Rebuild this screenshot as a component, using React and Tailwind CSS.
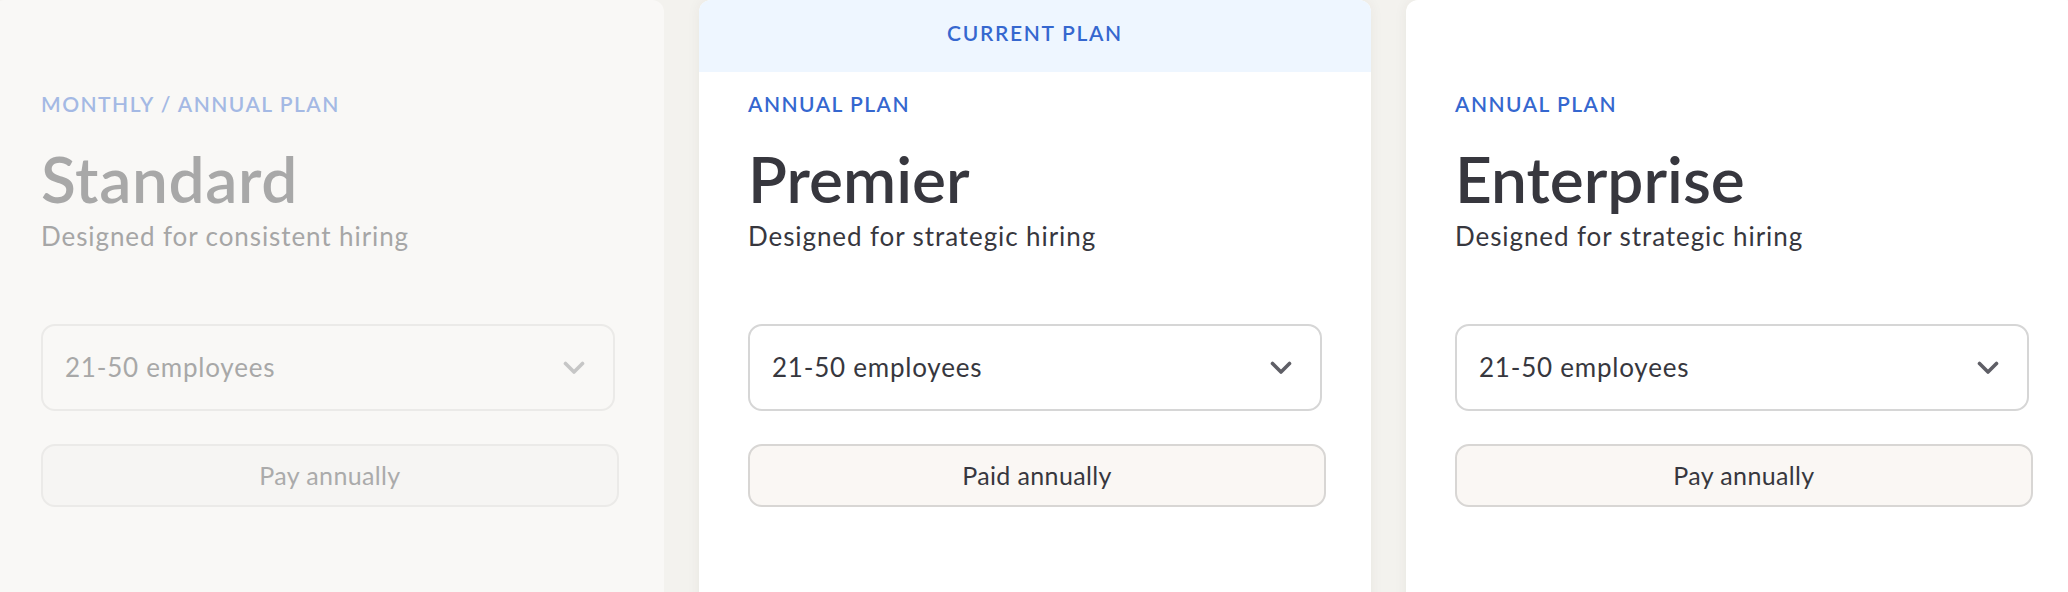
import { useState } from "react";

const plans = [
  {
    id: "standard",
    label: "MONTHLY / ANNUAL PLAN",
    name: "Standard",
    blurb: "Designed for consistent hiring",
    button: "Pay annually",
    muted: true,
  },
  {
    id: "premier",
    label: "ANNUAL PLAN",
    name: "Premier",
    blurb: "Designed for strategic hiring",
    button: "Paid annually",
    current: true,
  },
  {
    id: "enterprise",
    label: "ANNUAL PLAN",
    name: "Enterprise",
    blurb: "Designed for strategic hiring",
    button: "Pay annually",
  },
];

function Chevron({ muted }) {
  return (
    <svg width="22" height="14" viewBox="0 0 22 14" fill="none">
      <polyline
        points="2.5,2.5 11,11 19.5,2.5"
        stroke={muted ? "#c6c6c6" : "#5f5f66"}
        strokeWidth="3.6"
        strokeLinecap="round"
        strokeLinejoin="round"
      />
    </svg>
  );
}

function PlanCard({ plan }) {
  const [size] = useState("21-50 employees");
  const muted = plan.muted;

  return (
    <div
      className={`w-[672px] shrink-0 h-full rounded-t-xl overflow-hidden flex flex-col ${
        muted ? "bg-[#f9f8f6]" : "bg-white shadow-[0_0_14px_rgba(60,50,30,0.06)]"
      }`}
    >
      {/* Top banner, empty for the other plans */}
      {plan.current ? (
        <div className="h-[72px] pb-[7px] bg-[#eef6ff] flex items-center justify-center">
          <span className="text-[21px] leading-6 font-semibold tracking-[0.08em] text-[#3567cf]">
            CURRENT PLAN
          </span>
        </div>
      ) : (
        <div className="h-[72px]" />
      )}

      <div className="px-[49px] pt-[20px] flex flex-col">
        <p
          className={`text-[21px] leading-6 font-semibold tracking-[0.07em] ${
            muted ? "text-[#a4b9e4] tracking-[0.06em]" : "text-[#3567cf]"
          }`}
        >
          {plan.label}
        </p>
        <h2
          className={`mt-[24px] text-[64px] leading-[77px] font-semibold ${
            muted ? "text-[#a8a8a8] tracking-[0.01em]" : "text-[#37373e]"
          }`}
        >
          {plan.name}
        </h2>
        <p
          className={`mt-[4px] text-[26px] leading-[31px] tracking-[0.035em] ${
            muted ? "text-[#a6a6a6]" : "text-[#37373e]"
          }`}
        >
          {plan.blurb}
        </p>

        {/* Company size select */}
        <div
          className={`mt-[72px] h-[87px] w-[574px] rounded-[14px] border-2 flex items-center justify-between pl-[22px] pr-[28px] ${
            muted ? "border-[#ebeae8] text-[#a8a8a8]" : "border-[#d6d6d6] bg-white text-[#37373e]"
          }`}
        >
          <span className="text-[26px] tracking-[0.03em]">{size}</span>
          <Chevron muted={muted} />
        </div>

        <button
          className={`mt-[33px] h-[63px] w-[578px] rounded-[14px] border-2 text-[25px] tracking-[0.015em] ${
            muted
              ? "bg-[#f6f5f3] border-[#ebeae8] text-[#ababab]"
              : "bg-[#faf7f4] border-[#d8d6d4] text-[#37373e]"
          }`}
        >
          {plan.button}
        </button>
      </div>
    </div>
  );
}

export default function App() {
  return (
    <div
      className="h-[592px] w-full overflow-hidden bg-[#f3f2ee]"
      style={{ fontFamily: "Lato, 'Noto Sans', sans-serif" }}
    >
      <div className="flex gap-[35px] -ml-[8px] h-[620px]">
        {plans.map((p) => (
          <PlanCard key={p.id} plan={p} />
        ))}
      </div>
    </div>
  );
}
